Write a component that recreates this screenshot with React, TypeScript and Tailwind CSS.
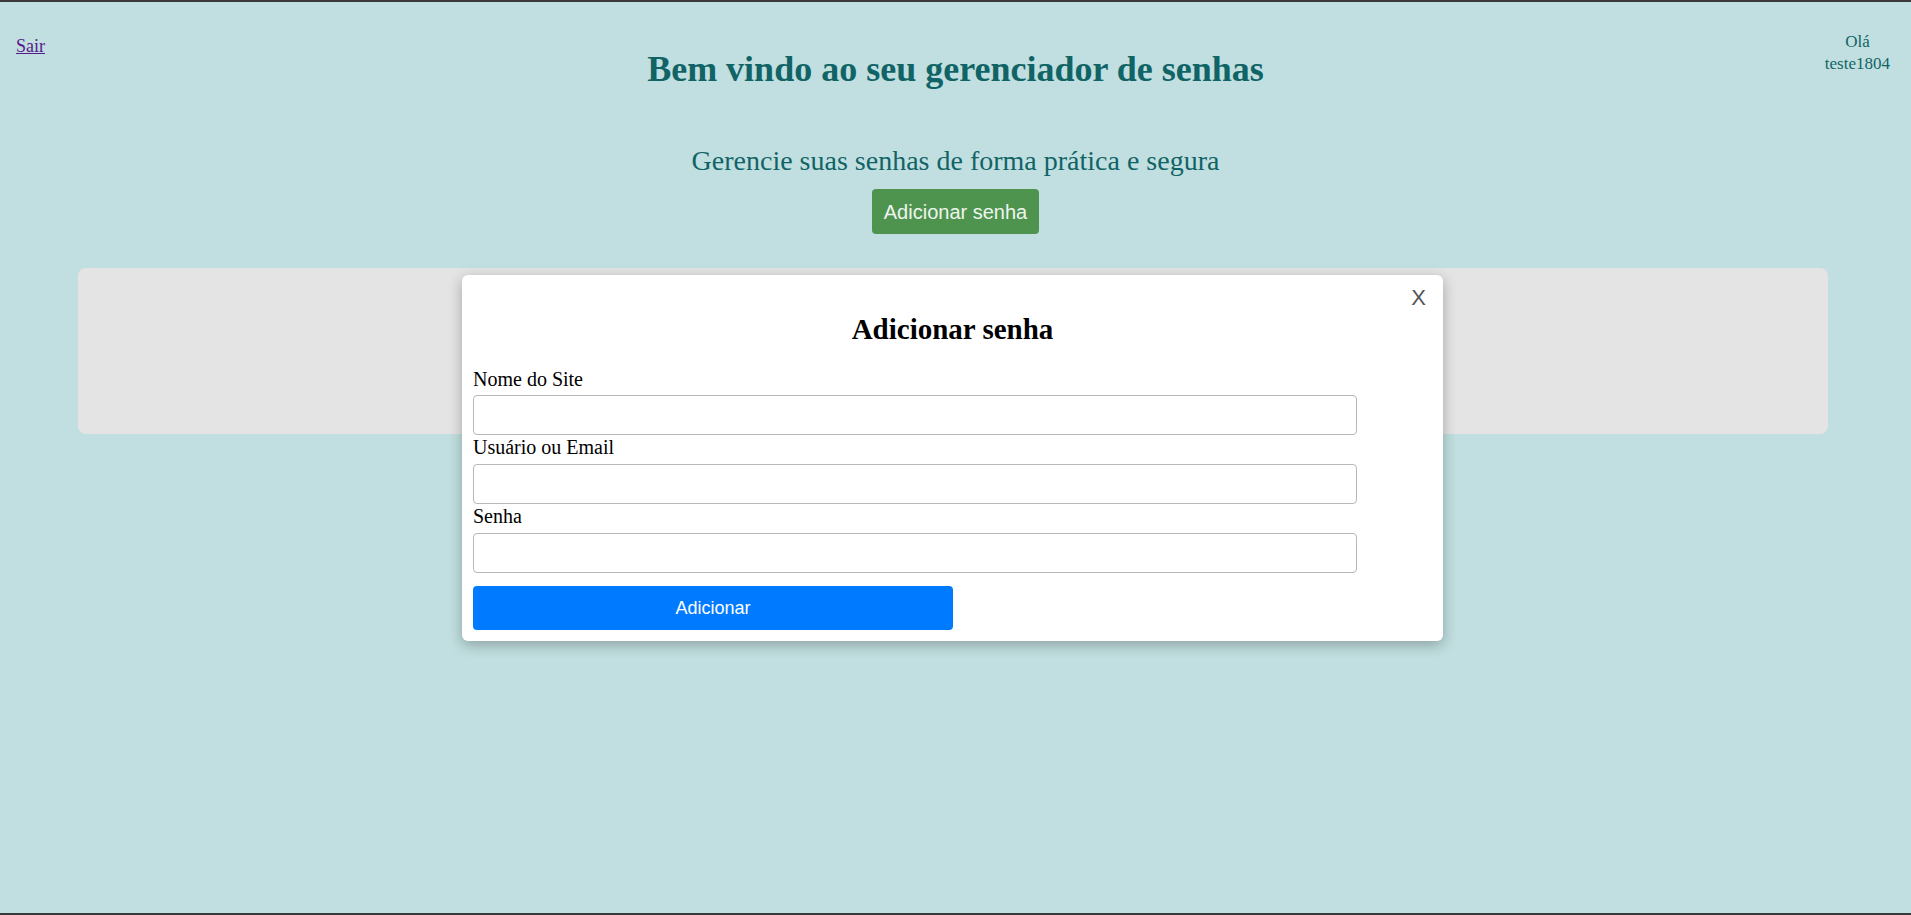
import React from "react";

export default function App() {
  return (
    <div className="relative h-[915px] w-full overflow-hidden border-t-[2px] border-b-[2px] border-[#3a3a3a] bg-[#c1dfe0] font-['Liberation_Serif',serif]">
      {/* top bar */}
      <div className="grid grid-cols-[1fr_auto_1fr] items-start">
        <div>
          <a href="#" className="ml-[16px] mt-[34px] inline-block text-[18px] leading-[21px] text-[#551a8b] underline">
            Sair
          </a>
        </div>
        <h1 className="mt-[47px] text-[36px] font-bold leading-[41px] text-[#116466]">
          Bem vindo ao seu gerenciador de senhas
        </h1>
        <div className="flex justify-end">
          <div className="mr-[21px] mt-[29px] text-center text-[17px] leading-[22px] text-[#116466]">
            Olá
            <br />
            teste1804
          </div>
        </div>
      </div>

      <div className="flex flex-col items-center">
        <p className="mt-[55px] text-[28px] leading-[32px] text-[#116466]">
          Gerencie suas senhas de forma prática e segura
        </p>
        <button className="mt-[12px] flex h-[45px] items-center rounded-[4px] bg-[#4e944f] px-[12px] font-['Liberation_Sans',sans-serif] text-[20px] text-[#eef4ee]">
          Adicionar senha
        </button>
      </div>

      <div className="ml-[78px] mt-[34px] h-[166px] w-[1750px] rounded-[8px] bg-[#e4e4e4]" />

      {/* modal overlay */}
      <div className="absolute left-[462px] top-[273px] w-[981px] rounded-[6px] bg-white p-[11px] shadow-[0_4px_14px_rgba(0,0,0,0.28)]">
        <button className="absolute right-[17px] top-[10px] font-['Liberation_Sans',sans-serif] text-[22px] leading-[25px] text-[#555]">
          X
        </button>
        <h2 className="mt-[27px] mb-[21px] text-center text-[29px] font-bold leading-[33px] text-black">
          Adicionar senha
        </h2>
        <label className="block text-[20px] leading-[24px] text-black">Nome do Site</label>
        <input className="mt-[4px] block h-[40px] w-[884px] rounded-[4px] border border-[#b8b8b8] bg-white px-[8px]" />
        <label className="block text-[20px] leading-[24px] text-black">Usuário ou Email</label>
        <input className="mt-[5px] block h-[40px] w-[884px] rounded-[4px] border border-[#b8b8b8] bg-white px-[8px]" />
        <label className="block text-[20px] leading-[24px] text-black">Senha</label>
        <input
          type="password"
          className="mt-[5px] block h-[40px] w-[884px] rounded-[4px] border border-[#b8b8b8] bg-white px-[8px]"
        />
        <button className="mt-[13px] block h-[44px] w-[480px] rounded-[4px] bg-[#007bff] font-['Liberation_Sans',sans-serif] text-[18px] text-white">
          Adicionar
        </button>
      </div>
    </div>
  );
}
